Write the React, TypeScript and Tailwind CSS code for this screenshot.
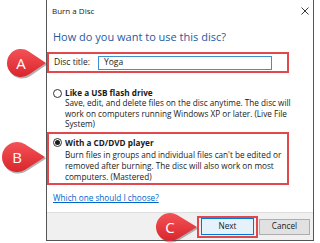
import React from "react";

function Marker({ letter, cx, cy, r, tip }: { letter: string; cx: number; cy: number; r: number; tip: number }) {
  const d = tip - cx;
  const th = Math.acos(r / d);
  const tx = cx + r * Math.cos(th);
  const ty1 = cy - r * Math.sin(th);
  const ty2 = cy + r * Math.sin(th);
  const left = cx - r - 2;
  const top = cy - r - 2;
  const w = tip - left + 4;
  const h = 2 * r + 6;
  return (
    <div className="absolute" style={{ left, top, width: w, height: h }}>
      <svg width={w} height={h} viewBox={`${left} ${top} ${w} ${h}`} className="absolute inset-0">
        <defs>
          <linearGradient id={`g${letter}`} x1="0" y1="0" x2="0" y2="1">
            <stop offset="0" stopColor="#f35257" />
            <stop offset="1" stopColor="#d9262c" />
          </linearGradient>
        </defs>
        <path
          d={`M ${tip} ${cy} L ${tx} ${ty1} A ${r} ${r} 0 1 0 ${tx} ${ty2} Z`}
          fill="#555"
          opacity="0.45"
          transform="translate(1.2 1.6)"
        />
        <path d={`M ${tip} ${cy} L ${tx} ${ty1} A ${r} ${r} 0 1 0 ${tx} ${ty2} Z`} fill={`url(#g${letter})`} />
      </svg>
      <div
        className="absolute flex items-center justify-center text-white text-[15px] leading-none font-['Open_Sans',sans-serif]"
        style={{ left: cx - left - r, top: cy - top - r, width: 2 * r, height: 2 * r }}
      >
        {letter}
      </div>
    </div>
  );
}

function Radio({ checked }: { checked?: boolean }) {
  return (
    <div className="w-[9px] h-[9px] rounded-full border border-[#333] bg-white flex items-center justify-center shrink-0">
      {checked && <div className="w-[5px] h-[5px] rounded-full bg-[#1a1a1a]" />}
    </div>
  );
}

export default function App() {
  return (
    <div className="relative w-[320px] h-[243px] bg-white overflow-hidden font-['Open_Sans',sans-serif] text-[#1a1a1a]">
      <div className="ml-[46px] w-[268px] h-[241px] border-l border-r border-b border-[#555] flex flex-col">
        {/* title bar */}
        <div className="h-[22px] flex items-center justify-between pl-[5px] pr-[4px] shrink-0">
          <span className="text-[8px] leading-none">Burn a Disc</span>
          <svg width="8" height="8" viewBox="0 0 8 8">
            <path d="M0.5 0.5 L7.5 7.5 M7.5 0.5 L0.5 7.5" stroke="#222" strokeWidth="0.9" />
          </svg>
        </div>
        <div className="flex-1 flex flex-col">
          <div className="pl-[6px] mt-[8px] text-[11px] leading-[14px] text-[#1f5aa0] whitespace-nowrap">
            How do you want to use this disc?
          </div>
          {/* Disc title box */}
          <div className="mt-[8px] w-[242px] h-[21px] border-2 border-[#e2474b] flex items-center pl-[5px]">
            <span className="text-[8.5px] leading-none w-[44px]">Disc title:</span>
            <div className="w-[174px] h-[14px] border border-[#3f8fcc] flex items-center pl-[5px] text-[8.5px]">
              Yoga
            </div>
          </div>
          {/* option 1 */}
          <div className="mt-[15px] pl-[6px] flex items-center gap-[3px]">
            <Radio />
            <span className="text-[8.2px] leading-[10px] font-bold whitespace-nowrap">Like a USB flash drive</span>
          </div>
          <div className="pl-[18px] text-[8.2px] leading-[10.5px] whitespace-nowrap">
            <div>Save, edit, and delete files on the disc anytime. The disc will</div>
            <div>work on computers running Windows XP or later. (Live File</div>
            <div>System)</div>
          </div>
          {/* option 2 */}
          <div className="mt-[2px] w-[242px] h-[53px] border-2 border-[#e2474b] flex flex-col pt-[4px]">
            <div className="pl-[4px] flex items-center gap-[3px]">
              <Radio checked />
              <span className="text-[8.2px] leading-[10px] font-bold whitespace-nowrap">With a CD/DVD player</span>
            </div>
            <div className="pl-[16px] text-[8.2px] leading-[11px] whitespace-nowrap mt-[1px]">
              <div>Burn files in groups and individual files can't be edited or</div>
              <div>removed after burning. The disc will also work on most</div>
              <div>computers. (Mastered)</div>
            </div>
          </div>
          <div className="mt-[8px] pl-[6px] text-[8.2px] leading-[10px] text-[#0066cc] underline whitespace-nowrap">
            Which one should I choose?
          </div>
        </div>
        {/* footer */}
        <div className="h-[28px] shrink-0 bg-[#f0f0f0] border-t border-[#dfdfdf] flex items-center justify-end pr-[3px] gap-[1px]">
          <div className="w-[61px] h-[22px] border-2 border-[#e2474b] flex items-center justify-center">
            <div className="w-[53px] h-[17px] bg-[#e5f1fb] border border-[#0078d7] flex items-center justify-center text-[8.2px]">
              Next
            </div>
          </div>
          <div className="w-[51px] h-[16px] bg-[#e1e1e1] border border-[#adadad] flex items-center justify-center text-[8.2px]">
            Cancel
          </div>
        </div>
      </div>
      <Marker letter="A" cx={21} cy={63} r={14} tip={46} />
      <Marker letter="B" cx={17} cy={157} r={15} tip={45} />
      <Marker letter="C" cx={170} cy={227} r={14} tip={197} />
    </div>
  );
}
